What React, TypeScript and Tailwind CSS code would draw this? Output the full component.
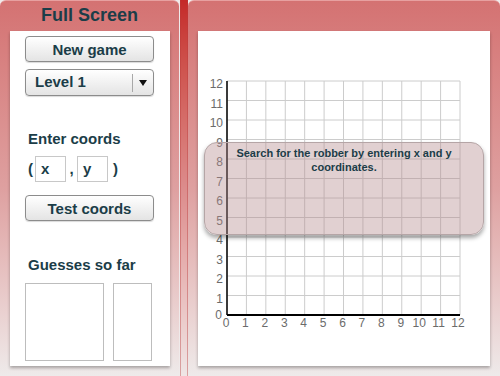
import React from "react";

const font = { fontFamily: '"Liberation Sans", Arial, sans-serif' };

const X0 = 29;
const Y0 = 50;
const STEP_X = 233 / 12;
const STEP_Y = 234 / 12;
const ticks = Array.from({ length: 13 }, (_, i) => i);

function Chart() {
  return (
    <svg width="292" height="335" className="block">
      {ticks.map((i) => (
        <line
          key={"v" + i}
          x1={X0 + i * STEP_X}
          x2={X0 + i * STEP_X}
          y1={Y0}
          y2={Y0 + 234}
          stroke="#cccccc"
          strokeWidth="1"
        />
      ))}
      {ticks.map((i) => (
        <line
          key={"h" + i}
          x1={X0}
          x2={X0 + 233}
          y1={Y0 + i * STEP_Y}
          y2={Y0 + i * STEP_Y}
          stroke="#cccccc"
          strokeWidth="1"
        />
      ))}
      <line x1={X0} x2={X0} y1={Y0} y2={Y0 + 234} stroke="#000" strokeWidth="1.5" />
      <line x1={X0} x2={X0 + 233} y1={Y0 + 234} y2={Y0 + 234} stroke="#000" strokeWidth="2" />
      {ticks.slice(1).map((v) => (
        <text
          key={"y" + v}
          x={25}
          y={Y0 + (12 - v) * STEP_Y + 7}
          textAnchor="end"
          fontSize="12"
          fill="#6b6b6b"
          style={font}
        >
          {v}
        </text>
      ))}
      <text x={24} y={288} textAnchor="end" fontSize="12" fill="#6b6b6b" style={font}>
        0
      </text>
      {ticks.map((v) => (
        <text
          key={"x" + v}
          x={X0 + v * STEP_X - (v >= 10 ? 2 : 1)}
          y={296}
          textAnchor="middle"
          fontSize="12"
          fill="#6b6b6b"
          style={font}
        >
          {v}
        </text>
      ))}
    </svg>
  );
}

const btn =
  "h-[26px] w-[129px] rounded-[4px] border border-[#8c8c8c] bg-gradient-to-b from-white to-[#e4e4e4] shadow-[0_1px_1px_rgba(0,0,0,0.15)] text-[15px] font-bold text-[#1b3d48] leading-none";

export default function App() {
  return (
    <div
      className="flex w-[500px] h-[376px] bg-[#efeaea] overflow-hidden"
      style={font}
    >
      {/* left panel */}
      <div className="w-[179px] h-full rounded-t-[6px] border-t border-[#e7a0a0] bg-gradient-to-b from-[#d47272] via-[#dea0a0] to-[#eeeaea] flex flex-col">
        <div className="h-[30px] pt-[3px] text-center text-[18px] leading-[22px] font-bold text-[#1b3d48]">
          Full Screen
        </div>
        <div className="ml-[10px] w-[160px] h-[335px] bg-white shadow-[0_2px_3px_rgba(0,0,0,0.3)] flex flex-col pl-[15px] pt-[5px]">
          <button className={btn}>New game</button>
          <div className="mt-[7px] h-[27px] w-[129px] rounded-[4px] border border-[#8c8c8c] bg-gradient-to-b from-white to-[#e4e4e4] shadow-[0_1px_1px_rgba(0,0,0,0.15)] flex items-center">
            <span className="flex-1 pl-[9px] text-[15px] font-bold text-[#1b3d48]">
              Level 1
            </span>
            <span className="h-[18px] w-px bg-[#a8a8a8]" />
            <span className="w-[20px] flex justify-center">
              <svg width="8" height="6" viewBox="0 0 8 6">
                <path d="M0 0 H8 L4 6 Z" fill="#111" />
              </svg>
            </span>
          </div>
          <div className="mt-[34px] pl-[3px] text-[15px] leading-[18px] font-bold text-[#1b3d48]">
            Enter coords
          </div>
          <div className="mt-[8px] flex items-center h-[26px] pl-[3px] text-[15px] font-bold text-[#1b3d48]">
            <span className="w-[7px]">(</span>
            <div className="w-[31px] h-[26px] border border-[#c8c8c8] pl-[5px] flex items-center">
              x
            </div>
            <span className="w-[11px] text-center">,</span>
            <div className="w-[31px] h-[26px] border border-[#c8c8c8] pl-[5px] flex items-center">
              y
            </div>
            <span className="pl-[5px]">)</span>
          </div>
          <button className={btn + " mt-[13px]"}>Test coords</button>
          <div className="mt-[35px] pl-[3px] text-[15px] leading-[18px] font-bold text-[#1b3d48]">
            Guesses so far
          </div>
          <div className="mt-[9px] flex gap-[9px]">
            <div className="w-[79px] h-[78px] border border-[#bdbdbd]" />
            <div className="w-[39px] h-[78px] border border-[#bdbdbd]" />
          </div>
        </div>
      </div>

      {/* divider */}
      <div className="w-[9px] h-full pl-[1px]">
        <div className="w-[8px] h-full bg-gradient-to-b from-[#c42828] via-[#dc8c8c] to-[#efe6e6] border-x border-[#b83a3a]/40" />
      </div>

      {/* right panel */}
      <div className="flex-1 h-full rounded-t-[6px] border-t border-[#e7a0a0] bg-gradient-to-b from-[#d47272] via-[#dea0a0] to-[#eeeaea] pt-[30px] pl-[10px]">
        <div className="relative w-[292px] h-[335px] bg-white shadow-[0_2px_3px_rgba(0,0,0,0.3)]">
          <Chart />
          <div className="absolute left-[6px] top-[111px] w-[280px] h-[93px] rounded-[13px] border border-[#b5a5a6] bg-[rgba(180,138,140,0.4)] shadow-[0_3px_4px_rgba(0,0,0,0.35)] pt-[3px] text-center text-[11px] leading-[14px] font-bold text-[#1b3d48]">
            Search for the robber by entering x and y
            <br />
            coordinates.
          </div>
        </div>
      </div>
    </div>
  );
}
